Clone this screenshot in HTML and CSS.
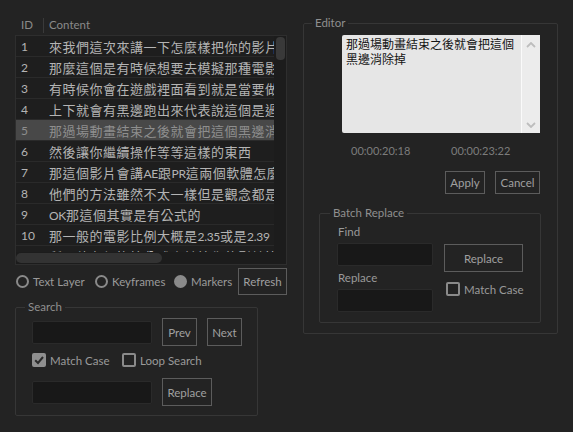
FILE: index.html
```html
<!DOCTYPE html>
<html lang="zh-Hant">
<head>
<meta charset="utf-8">
<title>Subtitle Editor</title>
<link rel="stylesheet" href="styles.css">
</head>
<body>
<div class="app">
  <div class="left">
    <div class="list-head">
      <div class="hcell hid">ID</div>
      <div class="hcell hcontent">Content</div>
    </div>
    <div class="list">
      <div class="list-body">
        <div class="rows">
          <div class="row"><span class="rid">1</span><span class="rtext">來我們這次來講一下怎麼樣把你的影片做成電影比例</span></div>
          <div class="row"><span class="rid">2</span><span class="rtext">那麼這個是有時候想要去模擬那種電影的感覺</span></div>
          <div class="row"><span class="rid">3</span><span class="rtext">有時候你會在遊戲裡面看到就是當要做過場動畫的時候</span></div>
          <div class="row"><span class="rid">4</span><span class="rtext">上下就會有黑邊跑出來代表說這個是過場</span></div>
          <div class="row sel"><span class="rid">5</span><span class="rtext">那過場動畫結束之後就會把這個黑邊消除掉</span></div>
          <div class="row"><span class="rid">6</span><span class="rtext">然後讓你繼續操作等等這樣的東西</span></div>
          <div class="row"><span class="rid">7</span><span class="rtext">那這個影片會講<span class="lat">AE</span>跟<span class="lat">PR</span>這兩個軟體怎麼做</span></div>
          <div class="row"><span class="rid">8</span><span class="rtext">他們的方法雖然不太一樣但是觀念都是一樣的</span></div>
          <div class="row"><span class="rid">9</span><span class="rtext"><span class="lat">OK</span>那這個其實是有公式的</span></div>
          <div class="row"><span class="rid">10</span><span class="rtext">那一般的電影比例大概是<span class="lat">2.35</span>或是<span class="lat">2.39</span></span></div>
          <div class="row"><span class="rid">11</span><span class="rtext">所以他有個換算公式來計算你的影片比例</span></div>
        </div>
        <div class="vscroll"><div class="vthumb"></div></div>
      </div>
      <div class="hscroll"><div class="hthumb"></div></div>
    </div>
    <div class="opts">
      <label class="radio r1"><span class="rdot"></span>Text Layer</label>
      <label class="radio r2"><span class="rdot"></span>Keyframes</label>
      <label class="radio"><span class="rdot on"></span>Markers</label>
      <button class="btn refresh">Refresh</button>
    </div>
    <fieldset class="group search">
      <legend>Search</legend>
      <div class="srow">
        <div class="input sinput"></div>
        <button class="btn prev">Prev</button>
        <button class="btn next">Next</button>
      </div>
      <div class="crow">
        <label class="check mcase"><span class="cbox on"><svg viewBox="0 0 14 14" width="14" height="14"><path d="M3.2 7.2 L6 10 L11 4" fill="none" stroke="#2a2a2a" stroke-width="2"/></svg></span>Match Case</label>
        <label class="check"><span class="cbox"></span>Loop Search</label>
      </div>
      <div class="srow rrow">
        <div class="input sinput"></div>
        <button class="btn sreplace">Replace</button>
      </div>
    </fieldset>
  </div>
  <div class="right">
    <fieldset class="group editor">
      <legend>Editor</legend>
      <div class="textbox">
        <div class="ttext">那過場動畫結束之後就會把這個黑邊消除掉</div>
        <div class="tsb">
          <svg class="arr" viewBox="0 0 10 6" width="10" height="6"><path d="M1 5 L5 1 L9 5" fill="none" stroke="#bdbdbd" stroke-width="1.8"/></svg>
          <svg class="arr" viewBox="0 0 10 6" width="10" height="6"><path d="M1 1 L5 5 L9 1" fill="none" stroke="#bdbdbd" stroke-width="1.8"/></svg>
        </div>
      </div>
      <div class="times">
        <span class="tc tc1">00:00:20:18</span>
        <span class="tc">00:00:23:22</span>
      </div>
      <div class="actions">
        <button class="btn apply">Apply</button>
        <button class="btn cancel">Cancel</button>
      </div>
      <fieldset class="group batch">
        <legend>Batch Replace</legend>
        <div class="bwrap">
          <div class="bleft">
            <div class="blabel">Find</div>
            <div class="input binput"></div>
            <div class="blabel second">Replace</div>
            <div class="input binput"></div>
          </div>
          <div class="bright">
            <button class="btn breplace">Replace</button>
            <label class="check bcheck"><span class="cbox"></span>Match Case</label>
          </div>
        </div>
      </fieldset>
    </fieldset>
  </div>
</div>
</body>
</html>
```
FILE: styles.css
```css
* { box-sizing: border-box; }
html, body { margin: 0; padding: 0; }
body {
  background: #232323;
  width: 573px;
  height: 432px;
  overflow: hidden;
  font-family: "Lato", "Noto Sans CJK TC", sans-serif;
  font-size: 11.5px;
  color: #999;
}
.app { display: flex; align-items: flex-start; }

.left { margin-left: 15px; width: 272px; padding-top: 15px; }

.list-head { display: flex; align-items: center; height: 20px; color: #8a8a8a; }
.hcell { line-height: 14px; }
.hid { width: 28px; padding-left: 6px; }
.hcontent { border-left: 1px solid #3a3a3a; padding-left: 5px; height: 15px; }

.list {
  height: 230px;
  border: 1px solid #2e2e2e;
  background: #1c1c1c;
  display: flex;
  flex-direction: column;
}
.list-body { display: flex; height: 216px; overflow: hidden; }
.rows { width: 258px; overflow: hidden; }
.row {
  display: flex;
  align-items: center;
  height: 21px;
  border-bottom: 1px solid #2a2a2a;
  background: #1e1e1e;
  white-space: nowrap;
  color: #b4b4b4;
}
.row.sel { background: #484848; color: #8e8e8e; }
.rid { width: 33px; flex: none; padding-left: 5px; font-size: 12px; }
.rtext { font-size: 13px; letter-spacing: 0.5px; overflow: hidden; }
.lat { font-size: 12px; letter-spacing: -0.3px; }
.vscroll { width: 12px; padding: 1px 1px 0 2px; }
.vthumb { height: 23px; border-radius: 4px; background: #393939; }
.hscroll { height: 12px; padding: 1px 0 0 0; }
.hthumb { width: 146px; height: 10px; border-radius: 5px; background: #333; }

.opts { display: flex; align-items: center; margin-top: 3px; height: 27px; }
.radio { display: flex; align-items: center; color: #9a9a9a; white-space: nowrap; flex: none; }
.r1 { width: 79px; }
.r2 { width: 79px; }
.rdot {
  width: 13px; height: 13px; border-radius: 50%;
  border: 2px solid #8a8a8a; margin-right: 4px; margin-left: 1px; flex: none;
}
.rdot.on { background: #8a8a8a; }

.btn {
  font-family: "Lato", sans-serif;
  font-size: 11.5px;
  color: #a0a0a0;
  background: #232323;
  border: 1px solid #5c5c5c;
  padding: 0;
  border-radius: 0;
  white-space: nowrap;
}
.refresh { margin-left: auto; width: 49px; height: 27px; flex: none; }

.group {
  margin: 0;
  border: 1px solid #363636;
  border-radius: 2px;
  min-width: 0;
}
.group legend {
  padding: 0 3px;
  margin-left: -7px;
  line-height: 14px;
  color: #8f8f8f;
}
.input { background: #181818; border: 1px solid #2a2a2a; border-radius: 2px; }

.search { width: 243px; margin-top: 5px; padding: 4px 0 9px 16px; }
.srow { display: flex; align-items: center; }
.sinput { width: 120px; height: 23px; }
.prev { width: 35px; height: 28px; margin-left: 10px; }
.next { width: 35px; height: 28px; margin-left: 10px; }
.crow { display: flex; align-items: center; margin-top: 7px; height: 14px; }
.check { display: flex; align-items: center; color: #9a9a9a; white-space: nowrap; }
.mcase { width: 90px; }
.cbox {
  width: 14px; height: 14px; border: 2px solid #8a8a8a; border-radius: 2px;
  margin-right: 4px; display: flex; align-items: center; justify-content: center; flex: none;
}
.cbox.on { background: #8f8f8f; border-color: #8f8f8f; }
.cbox svg { flex: none; }
.rrow { margin-top: 11px; }
.sreplace { width: 50px; height: 28px; margin-left: 10px; }

.right { margin-left: 16px; width: 255px; }
.editor { margin-top: 16px; padding: 5px 16px 10px 15px; }
.textbox {
  margin-left: 23px;
  width: 198px; height: 98px;
  background: #e6e6e6;
  border-radius: 2px;
  display: flex;
}
.ttext {
  flex: 1;
  padding: 1px 4px;
  font-family: "Noto Sans CJK TC", sans-serif;
  font-size: 12px;
  line-height: 15px;
  color: #141414;
}
.tsb {
  width: 19px;
  border-left: 1px solid #fafafa;
  background: #ececec;
  display: flex; flex-direction: column; align-items: center; justify-content: space-between;
  padding: 7px 0 5px;
}
.times { display: flex; margin-top: 11px; padding-left: 32px; line-height: 14px; }
.tc { font-size: 11px; color: #7c7c7c; }
.tc1 { width: 100px; }
.actions { display: flex; justify-content: flex-end; margin-top: 13px; padding-right: 1px; }
.apply { width: 40px; height: 23px; }
.cancel { width: 45px; height: 23px; margin-left: 10px; }

.batch { margin-top: 12px; width: 222px; padding: 5px 0 10px 17px; }
.bwrap { display: flex; }
.bleft { width: 96px; }
.blabel { line-height: 14px; color: #9a9a9a; padding-left: 1px; }
.blabel.second { margin-top: 5px; }
.binput { width: 96px; height: 23px; margin-top: 4px; }
.bright { margin-left: 11px; }
.breplace { width: 79px; height: 28px; margin-top: 19px; }
.bcheck { margin-top: 10px; margin-left: 2px; }
```
